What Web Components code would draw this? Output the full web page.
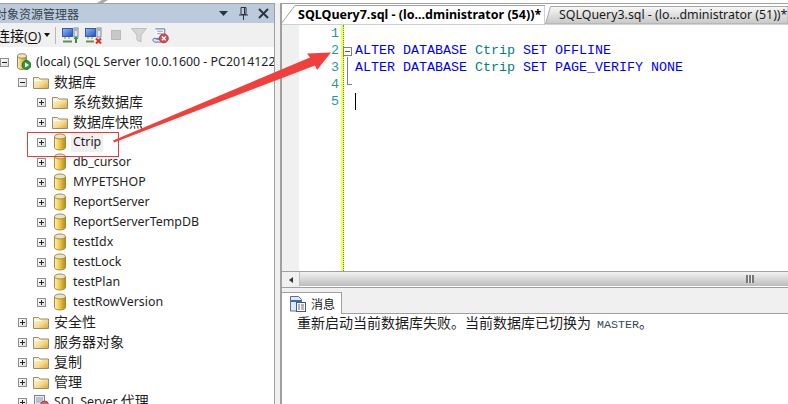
<!DOCTYPE html>
<html lang="zh">
<head>
<meta charset="utf-8">
<title>SSMS</title>
<style>
    html, body { margin: 0; height: 404px; overflow: hidden; background: #fff; }
    body { font-family: "Noto Sans", "Noto Sans CJK SC", sans-serif; }
</style>
</head>
<body>
<ssms-app>
    <object-explorer slot="left">
        <tree-row depth="0" kind="server" state="open">(local) (SQL Server 10.0.1600 - PC2014122</tree-row>
        <tree-row depth="1" kind="folder" state="open" cjk>数据库</tree-row>
        <tree-row depth="2" kind="folder" cjk>系统数据库</tree-row>
        <tree-row depth="2" kind="folder" cjk>数据库快照</tree-row>
        <tree-row depth="2" kind="db" selected>Ctrip</tree-row>
        <tree-row depth="2" kind="db">db_cursor</tree-row>
        <tree-row depth="2" kind="db">MYPETSHOP</tree-row>
        <tree-row depth="2" kind="db">ReportServer</tree-row>
        <tree-row depth="2" kind="db">ReportServerTempDB</tree-row>
        <tree-row depth="2" kind="db">testIdx</tree-row>
        <tree-row depth="2" kind="db">testLock</tree-row>
        <tree-row depth="2" kind="db">testPlan</tree-row>
        <tree-row depth="2" kind="db">testRowVersion</tree-row>
        <tree-row depth="1" kind="folder" cjk>安全性</tree-row>
        <tree-row depth="1" kind="folder" cjk>服务器对象</tree-row>
        <tree-row depth="1" kind="folder" cjk>复制</tree-row>
        <tree-row depth="1" kind="folder" cjk>管理</tree-row>
        <tree-row depth="1" kind="agent">SQL Server <span style="font-size:14px">代理</span></tree-row>
    </object-explorer>
    <query-pane slot="right"></query-pane>
</ssms-app>

<script>
// shared icons, each one is drawn on a 16x16 box
const ICONS = {
    folder: `<svg width="16" height="16" viewBox="0 0 16 16">
        <defs><linearGradient id="f" x1="0" y1="0" x2="1" y2="1"><stop offset="0" stop-color="#fffbe6"/><stop offset=".55" stop-color="#f8dc8c"/><stop offset="1" stop-color="#d9a32e"/></linearGradient></defs>
        <path d="M.5 3.500h5l1.500 1.500h8.500v9.500h-15z" fill="url(#f)" stroke="#8f8f80"/>
        <path d="M1.500 6.500h7" stroke="#fff" fill="none"/></svg>`,
    db: `<svg width="16" height="18" viewBox="0 0 16 18">
        <defs><linearGradient id="d" x1="0" x2="1" y1="0" y2="0"><stop offset="0" stop-color="#fff3bb"/><stop offset=".45" stop-color="#f0c94f"/><stop offset="1" stop-color="#b58a12"/></linearGradient></defs>
        <path d="M2.500 3.500v11c0 1.300 2.500 2.500 5.500 2.500s5.500-1.200 5.500-2.500v-11z" fill="url(#d)" stroke="#a98c3a"/>
        <ellipse cx="8" cy="3.500" rx="5.500" ry="2.500" fill="#e8e3cd" stroke="#a98c3a"/></svg>`,
    server: `<svg width="16" height="18" viewBox="0 0 16 18">
        <defs><linearGradient id="s" x1="0" x2="1" y1="0" y2="0"><stop offset="0" stop-color="#fff0b8"/><stop offset=".5" stop-color="#e9c25a"/><stop offset="1" stop-color="#b08a2a"/></linearGradient></defs>
        <path d="M2.500 3v11.500c0 1 2 2 4.500 2s4.500-1 4.500-2V3z" fill="url(#s)" stroke="#9a8450"/>
        <ellipse cx="7" cy="3" rx="4.500" ry="2.200" fill="#eee6cc" stroke="#9a8450"/>
        <circle cx="11.500" cy="12" r="4.400" fill="#2f9a3c" stroke="#1b6b2a"/>
        <path d="M10 9.500l4 2.500-4 2.500z" fill="#fff"/></svg>`,
    agent: `<svg width="16" height="16" viewBox="0 0 16 16">
        <rect x="1.500" y="1.500" width="10" height="12" fill="#e8ecf2" stroke="#76829a"/>
        <path d="M3 4h7M3 6h7M3 8h5" stroke="#8c98ae"/>
        <circle cx="11.500" cy="11" r="4" fill="#d9606a" stroke="#a33"/></svg>`,
    connect: `<svg width="17" height="17" viewBox="0 0 17 17">
        <defs><linearGradient id="m" x1="0" y1="0" x2="1" y2="1"><stop offset="0" stop-color="#8fc0ff"/><stop offset="1" stop-color="#1c4fc0"/></linearGradient></defs>
        <rect x=".5" y="1.500" width="10" height="8" fill="url(#m)" stroke="#3a5a9a"/>
        <rect x="12" y="1" width="4" height="9" fill="#dfe4ee" stroke="#7a8aa5"/>
        <path d="M13 3h2" stroke="#6a7a95"/>
        <path d="M3 10v2M7 10v2" stroke="#7a8aa5"/>
        <path d="M1 14.500h9" stroke="#6b8f3a" stroke-width="2"/>
        <path d="M13 16v-4h-1.500l2.500-3 2.500 3H15v4z" fill="#2e9a2e"/></svg>`,
    disconnect: `<svg width="17" height="17" viewBox="0 0 17 17">
        <defs><linearGradient id="m2" x1="0" y1="0" x2="1" y2="1"><stop offset="0" stop-color="#8fc0ff"/><stop offset="1" stop-color="#1c4fc0"/></linearGradient></defs>
        <rect x=".5" y="1.500" width="10" height="8" fill="url(#m2)" stroke="#3a5a9a"/>
        <rect x="12" y="1" width="4" height="9" fill="#dfe4ee" stroke="#7a8aa5"/>
        <path d="M13 3h2" stroke="#6a7a95"/>
        <path d="M3 10v2M7 10v2" stroke="#7a8aa5"/>
        <path d="M1 14.500h8" stroke="#6b8f3a" stroke-width="2"/>
        <path d="M11 11.500l5 5M16 11.500l-5 5" stroke="#e02a1a" stroke-width="2"/></svg>`,
    stop: `<svg width="10" height="10" viewBox="0 0 10 10"><rect x=".5" y=".5" width="9" height="9" fill="#c8c8c8" stroke="#bbb"/></svg>`,
    funnel: `<svg width="16" height="16" viewBox="0 0 16 16">
        <path d="M.5 1.500h15l-5.500 6.500v7l-4-2V8z" fill="#d6d6d6" stroke="#bdbdbd"/></svg>`,
    script: `<svg width="17" height="17" viewBox="0 0 18 17">
        <path d="M3.500 1.500h10v10H2.500" fill="#f4f6fa" stroke="#5c6f96"/>
        <path d="M1 13c0-1.500 2-2 3-1s6 .5 6 .5v3H3c-1 0-2-.8-2-2.500z" fill="#dfe6f2" stroke="#5c6f96"/>
        <path d="M5.500 4h6M5.500 6.500h5" stroke="#8a9ab8"/>
        <circle cx="12.500" cy="11.500" r="4.700" fill="#d2505a" stroke="#a53840"/>
        <path d="M10.500 9.500l4 4M14.500 9.500l-4 4" stroke="#fff" stroke-width="1.300"/></svg>`,
    message: `<svg width="16" height="16" viewBox="0 0 16 16">
        <path d="M.5.5h8l3 3V15H.5z" fill="#dfe9f7" stroke="#5a6f98"/>
        <path d="M1 5h10" stroke="#3c6bb5" stroke-width="2"/>
        <rect x="6.500" y="6.500" width="9" height="9" fill="#fff" stroke="#4a5a7a"/>
        <path d="M8 9h2M11 9h3M8 11h2M8 13h2" stroke="#3c6bb5"/>
        <path d="M11 11h3M11 13h3" stroke="#d8503a"/></svg>`
};

class SsmsApp extends HTMLElement {
    constructor() {
        super();
        this.attachShadow({ mode: 'open' });
        this.shadowRoot.innerHTML = `
            <style>
                :host { display: block; width: 788px; height: 404px; overflow: hidden; position: relative; background: #fff; }
                .top { height: 3px; }
                .main { display: flex; height: 401px; }
                .gap { width: 5px; flex: none; background: #f0f0f0; border-left: 1px solid #a0a0a0; }
                svg { position: absolute; left: 0; top: 0; pointer-events: none; }
            </style>
            <div class="top"></div>
            <div class="main">
                <slot name="left"></slot>
                <div class="gap"></div>
                <slot name="right"></slot>
            </div>
            <!-- the red note drawn over the shot -->
            <svg width="788" height="404" viewBox="0 0 788 404">
                <rect x="27.500" y="132.500" width="91" height="24" fill="none" stroke="#ee3a3a"/>
                <path d="M113 140.500L310 57.500L307 53.500L331 52.500L317 70L315 65.500L114 142.500z" fill="#f1403c"/>
                <path d="M97 3L102 0h6L103 3z" fill="#a8a8a8"/>
            </svg>
        `;
    }
}

class ObjectExplorer extends HTMLElement {
    constructor() {
        super();
        this.attachShadow({ mode: 'open' });
        this.shadowRoot.innerHTML = `
            <style>
                :host { display: flex; flex-direction: column; width: 274px; flex: none; height: 401px; overflow: hidden;
                    border-top: 1px solid #a0a0a0; box-sizing: border-box; color: #1a1a1a; }
                .title { height: 19px; flex: none; background: #bccbdb; display: flex; align-items: center; color: #36424f;
                    font: 12px "Noto Sans CJK SC", sans-serif; padding-right: 5px; }
                .title span { margin-left: -5px; flex: 1; white-space: nowrap; }
                .title svg { margin-left: 9px; }
                .tools { height: 24px; flex: none; background: #f0f0f0; display: flex; align-items: center; }
                .conn { margin-left: -4px; font: 14px "Noto Sans CJK SC", sans-serif; color: #111; white-space: nowrap; }
                .conn em { font: 12.500px "Noto Sans", sans-serif; }
                .conn u { text-underline-offset: 2px; }
                .caret { width: 0; height: 0; margin-left: 3px; border: 3px solid transparent; border-top: 4px solid #111; border-bottom: 0; }
                .sep { width: 1px; height: 17px; background: #b8b8b8; margin: 0 6px 0 5px; }
                .tools svg { flex: none; }
                .group { display: flex; align-items: center; }
                .tree { padding-top: 5px; display: flex; flex-direction: column; min-height: 0; }
            </style>
            <div class="title"><span>对象资源管理器</span>
                <svg width="10" height="6" viewBox="0 0 10 6"><path d="M0 0h9L4.500 5z" fill="#2c3440"/></svg>
                <svg width="11" height="13" viewBox="0 0 11 13"><path d="M3 .5h5v7H3zM6.500 1v6M1 8h9M5.500 8v5" fill="none" stroke="#2c3440"/></svg>
                <svg width="11" height="11" viewBox="0 0 11 11"><path d="M1 1l9 9M10 1l-9 9" stroke="#2c3440" stroke-width="2"/></svg>
            </div>
            <div class="tools">
                <span class="conn">连接<em>(<u>O</u>)</em></span><span class="caret"></span><span class="sep"></span>
                <span class="group" style="gap:6px">${ICONS.connect}${ICONS.disconnect}</span>
                <span class="group" style="margin-left:9px;gap:10px">${ICONS.stop}${ICONS.funnel}</span>
                <span class="group" style="margin-left:5px">${ICONS.script}</span>
            </div>
            <div class="tree"><slot></slot></div>
        `;
    }
}

class TreeRow extends HTMLElement {
    constructor() {
        super();
        this.attachShadow({ mode: 'open' });
    }

    connectedCallback() {
        const depth = Number(this.getAttribute('depth'));
        const open = this.getAttribute('state') === 'open';
        const kind = this.getAttribute('kind');
        this.shadowRoot.innerHTML = `
            <style>
                :host { display: flex; align-items: center; height: 20px; flex: none; white-space: nowrap;
                    font-size: 12.400px; color: #1f1f1f; padding-left: ${19 * depth - 1}px; }
                :host([cjk]) { font-size: 14px; }
                .box { width: 7px; height: 7px; flex: none; border: 1px solid #8e8f8f; background: linear-gradient(135deg, #fff, #dcdcdc); position: relative; }
                .box::before { content: ""; position: absolute; left: 1px; top: 3px; width: 5px; height: 1px; background: #222; }
                .box.plus::after { content: ""; position: absolute; left: 3px; top: 1px; width: 1px; height: 5px; background: #222; }
                .icon { width: 16px; height: 18px; margin-left: 6px; flex: none; display: flex; align-items: center; }
                .label { margin-left: 3px; padding: 0 2px 2px; line-height: 17px; }
                :host([selected]) .label { background: #f0f0f0; }
            </style>
            <span class="box ${open ? '' : 'plus'}"></span>
            <span class="icon">${ICONS[kind]}</span>
            <span class="label"><slot></slot></span>
        `;
    }
}

class QueryPane extends HTMLElement {
    constructor() {
        super();
        this.attachShadow({ mode: 'open' });
        this.shadowRoot.innerHTML = `
            <style>
                :host { display: flex; flex-direction: column; flex: 1; min-width: 0; height: 401px; overflow: hidden; box-sizing: border-box;
                    border-top: 1px solid #a0a0a0; border-left: 2px solid #a0a0a0; }
                .tabs { height: 21px; flex: none; display: flex; white-space: nowrap; color: #1a1a1a; overflow: hidden; }
                .tab { position: relative; height: 21px; display: flex; align-items: center; flex: none; }
                .tab svg { position: absolute; left: 0; top: 0; }
                .tab span { position: relative; }
                .t1 { width: 263px; font-weight: bold; font-size: 12.500px; color: #000; }
                .t1 span { margin-left: 16px; }
                .t2 { width: 243px; font-size: 12.400px; }
                .t2 span { margin-left: 14px; }
                .editor { height: 246px; flex: none; display: flex; font: 13.333px/17px "Liberation Mono", monospace; }
                .numcol { width: 59px; padding-right: 2px; box-sizing: border-box; flex: none; color: #1f9aa0; text-align: right;
                    background: linear-gradient(90deg, #f0f0f0 17px, #fff 17px); }
                .mark { width: 2px; flex: none; background: #ffff30; border-right: 1px dotted #00a8a8; }
                .fold { width: 11px; flex: none; position: relative; }
                .code { flex: 1; padding-top: 17px; white-space: pre; color: #00f; }
                .code i { font-style: normal; color: #008080; }
                .caret { width: 1px; height: 17px; background: #000; }
                .box { position: absolute; left: -1px; top: 22px; width: 7px; height: 7px; border: 1px solid #808080; background: #fff; }
                .box::before { content: ""; position: absolute; left: 1px; top: 3px; width: 5px; height: 1px; background: #555; }
                .rail { position: absolute; left: 3px; top: 32px; width: 4px; height: 27px; border-left: 1px solid #808080; border-bottom: 1px solid #808080; }
                .scroll { height: 15px; flex: none; display: flex; border-top: 1px solid #a0a0a0; border-bottom: 1px solid #a0a0a0; background: #f0f0f0; }
                .btn { width: 17px; flex: none; display: flex; align-items: center; justify-content: center; }
                .btn b { width: 0; height: 0; border: 3px solid transparent; border-right: 4px solid #333; border-left: 0; }
                .thumb { flex: 1; display: flex; align-items: center; justify-content: flex-end; padding-right: 34px;
                    background: linear-gradient(#f3f3f3, #bcbcbc); border-left: 1px solid #c0c0c0; border-bottom: 1px solid #fff; }
                .grip { width: 8px; height: 8px; background: repeating-linear-gradient(90deg, #777 0 2px, #eee 2px 3px); }
                .strip { flex: none; height: 25px; background: #f0f0f0; border-bottom: 1px solid #a0a0a0; display: flex; align-items: flex-end; }
                .rtab { height: 22px; width: 60px; margin-bottom: -1px; border: 1px solid #a0a0a0; border-bottom: 0; border-left: 0; display: flex; align-items: center;
                    font: 12px "Noto Sans CJK SC", sans-serif; color: #111; box-sizing: border-box; background: #fff; padding-left: 8px; gap: 5px; }
                .msg { flex: 1; padding-left: 15px; font: 14px/17px "Noto Sans CJK SC", sans-serif; color: #1c1c1c; white-space: nowrap; }
                .msg b { font: 11.670px "Liberation Mono", monospace; color: #33475f; margin-left: 6px; }
            </style>
            <div class="tabs">
                <div class="tab t1">
                    <svg width="263" height="21" viewBox="0 0 263 21"><path d="M-1 20L13 1.500H263V21H-1z" fill="#fff" stroke="#a0a0a0"/></svg>
                    <span>SQLQuery7.sql - (lo...dministrator (54))*</span>
                </div>
                <div class="tab t2">
                    <svg width="243" height="21" viewBox="0 0 243 21"><defs><linearGradient id="g" x1="0" x2="0" y1="0" y2="1"><stop offset="0" stop-color="#f8f8f8"/><stop offset="1" stop-color="#c6c6c6"/></linearGradient></defs><path d="M.5 20L5.500 2.500H243V20z" fill="url(#g)" stroke="#a8a8a8"/></svg>
                    <span>SQLQuery3.sql - (lo...dministrator (51))*</span>
                </div>
            </div>
            <div class="editor">
                <div class="numcol"><div>1</div><div>2</div><div>3</div><div>4</div><div>5</div></div>
                <div class="mark"></div>
                <div class="fold"><span class="box"></span><span class="rail"></span></div>
                <div class="code"><div>ALTER DATABASE <i>Ctrip</i> SET OFFLINE</div><div>ALTER DATABASE <i>Ctrip</i> SET PAGE_VERIFY NONE</div><div>&nbsp;</div><div class="caret"></div></div>
            </div>
            <div class="scroll">
                <div class="btn"><b></b></div>
                <div class="thumb"><span class="grip"></span></div>
            </div>
            <div class="strip"><div class="rtab">${ICONS.message}<span>消息</span></div></div>
            <div class="msg">重新启动当前数据库失败。当前数据库已切换为<b>MASTER</b>。</div>
        `;
    }
}

customElements.define('ssms-app', SsmsApp);
customElements.define('object-explorer', ObjectExplorer);
customElements.define('tree-row', TreeRow);
customElements.define('query-pane', QueryPane);
</script>
</body>
</html>
